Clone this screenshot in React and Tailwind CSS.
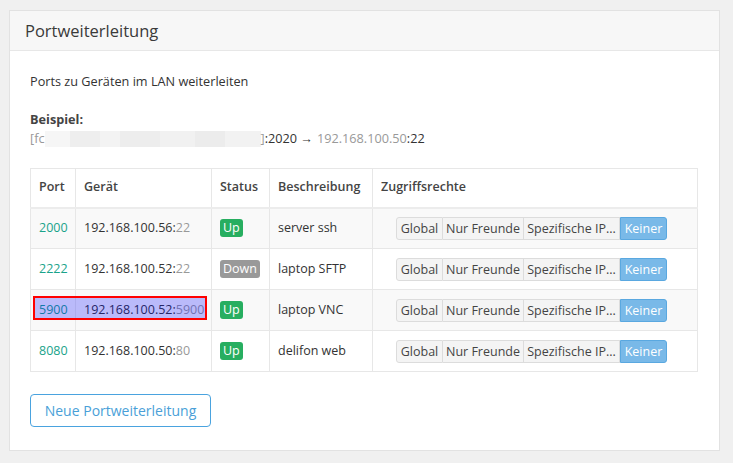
import React from "react";

const rows = [
  { port: "2000", ip: "192.168.100.56", p: "22", up: true, desc: "server ssh", striped: true },
  { port: "2222", ip: "192.168.100.52", p: "22", up: false, desc: "laptop SFTP", striped: false },
  { port: "5900", ip: "192.168.100.52", p: "5900", up: true, desc: "laptop VNC", striped: true, sel: true },
  { port: "8080", ip: "192.168.100.50", p: "80", up: true, desc: "delifon web", striped: false },
];

function Group() {
  return (
    <div className="flex h-[23px] text-[12.5px] leading-[21px] whitespace-nowrap">
      <span className="w-[47px] border border-[#dcdcdc] bg-[#f4f4f4] text-[#444] rounded-l-[3px] text-center">Global</span>
      <span className="w-[81px] border border-l-0 border-[#dcdcdc] bg-[#f4f4f4] text-[#444] text-center">Nur Freunde</span>
      <span className="w-[96px] border border-l-0 border-[#dcdcdc] bg-[#f4f4f4] text-[#444] text-center">Spezifische IP...</span>
      <span className="w-[47px] border border-[#5aa8e0] bg-[#79b9e8] text-white rounded-r-[3px] text-center">Keiner</span>
    </div>
  );
}

export default function App() {
  return (
    <div className="min-h-[463px] bg-[#f0f0f0] pt-[10px] pl-[9px]" style={{ fontFamily: '"Open Sans", sans-serif' }}>
      <div className="w-[711px] h-[441px] bg-white border border-[#e2e2e2]">
        <div className="h-[40px] bg-[#f7f7f7] border-b border-[#e7e7e7] px-[15px] flex items-center">
          <h1 className="text-[16.5px] text-[#3a3a3a] leading-none pt-[1px]">Portweiterleitung</h1>
        </div>
        <div className="px-[20px] pt-[20px] text-[12.7px] text-[#333]">
          <p className="leading-[20px]">Ports zu Geräten im LAN weiterleiten</p>
          <p className="mt-[19px] leading-[19px] font-bold text-[#444]">Beispiel:</p>
          <p className="leading-[19px] flex items-center whitespace-nowrap">
            <span className="text-[#999]">[fc</span>
            <span className="inline-flex h-[16px] w-[216px]">
              <span className="w-[25px] bg-[#f6f6f6]" />
              <span className="w-[30px] bg-[#eeeeee]" />
              <span className="w-[20px] bg-[#f3f3f3]" />
              <span className="w-[40px] bg-[#ededed]" />
              <span className="w-[35px] bg-[#f1f1f1]" />
              <span className="w-[30px] bg-[#ececec]" />
              <span className="w-[36px] bg-[#f2f2f2]" />
            </span>
            <span className="text-[#999]">]</span>
            <span>:2020 → </span>
            <span className="text-[#999] ml-[4px]">192.168.100.50</span>
            <span>:22</span>
          </p>

          <div className="relative mt-[20px]">
            <table className="table-fixed w-[668px] border-collapse border border-[#e7e7e7] text-[12.5px]">
              <colgroup>
                <col className="w-[45px]" />
                <col className="w-[136px]" />
                <col className="w-[58px]" />
                <col className="w-[103px]" />
                <col />
              </colgroup>
              <thead>
                <tr className="h-[39px] border-b-2 border-[#ececec]">
                  <th className="border border-[#e7e7e7] px-2 text-left font-semibold text-[#444]">Port</th>
                  <th className="border border-[#e7e7e7] px-2 text-left font-semibold text-[#444]">Gerät</th>
                  <th className="border border-[#e7e7e7] px-2 text-left font-semibold text-[#444]">Status</th>
                  <th className="border border-[#e7e7e7] px-2 text-left font-semibold text-[#444]">Beschreibung</th>
                  <th className="border border-[#e7e7e7] px-2 text-left font-semibold text-[#444]">Zugriffsrechte</th>
                </tr>
              </thead>
              <tbody>
                {rows.map((r) => (
                  <tr key={r.port} className={"h-[41px] " + (r.striped ? "bg-[#f9f9f9]" : "bg-white")}>
                    <td className="border border-[#e7e7e7] px-2 text-[#1aa38a]">{r.port}</td>
                    <td className="border border-[#e7e7e7] px-2 text-[#333] whitespace-nowrap">
                      {r.ip}:<span className="text-[#999]">{r.p}</span>
                    </td>
                    <td className="border border-[#e7e7e7] px-2">
                      {r.up ? (
                        <span className="inline-block rounded-[3px] bg-[#27ae60] px-[3px] text-[12.5px] leading-[18px] text-white">Up</span>
                      ) : (
                        <span className="inline-block rounded-[3px] bg-[#999] px-[3px] text-[12.5px] leading-[18px] text-white">Down</span>
                      )}
                    </td>
                    <td className="border border-[#e7e7e7] px-2 text-[#333]">{r.desc}</td>
                    <td className="border border-[#e7e7e7] pl-[23px]">
                      <Group />
                    </td>
                  </tr>
                ))}
              </tbody>
            </table>
            <div className="absolute left-[3px] top-[128px] w-[174px] h-[24px] border-2 border-[#ff0000] bg-[rgba(0,0,255,0.25)]" />
          </div>

          <button className="mt-[22px] h-[33px] w-[181px] rounded-[4px] border border-[#4aa3df] text-[14px] text-[#4a9fd8]">
            Neue Portweiterleitung
          </button>
        </div>
      </div>
    </div>
  );
}
